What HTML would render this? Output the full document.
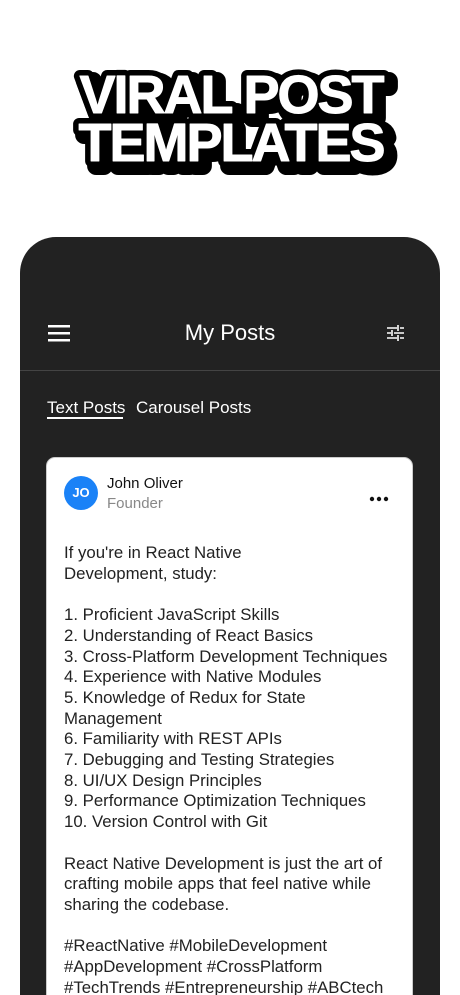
<!DOCTYPE html>
<html><head><meta charset="utf-8"><style>
*{margin:0;padding:0;box-sizing:border-box}
html,body{width:460px;height:995px;overflow:hidden}
body{background:#fff;position:relative;font-family:"Liberation Sans",sans-serif}
.phone{position:absolute;left:20px;top:237px;width:420px;height:800px;background:#222;border-radius:36px 36px 0 0}
.hdr{position:absolute;top:320px;left:0;width:460px;text-align:center;color:#fff;font-size:22px}
.div{position:absolute;left:20px;top:370px;width:420px;height:1px;background:#444}
.tab{position:absolute;top:398px;color:#fff;font-size:17px}
.card{position:absolute;left:46px;top:457px;width:367px;height:560px;background:#fff;border-radius:9px;border:1px solid #ccc}
.av{position:absolute;left:64px;top:476px;width:34px;height:34px;border-radius:50%;background:#1a82f7;color:#fff;font-weight:bold;font-size:13px;text-align:center;line-height:34px}
.body{position:absolute;left:64px;top:543px;font-size:16.8px;line-height:20.7px;color:#222;white-space:pre}
</style></head><body>
<svg style="position:absolute;left:0;top:40px" width="460" height="150">
<g font-family="Liberation Sans" font-weight="bold" font-size="54" text-anchor="middle" letter-spacing="-2" stroke-linejoin="round">
<text x="236" y="78" fill="#000" stroke="#000" stroke-width="18">VIRAL POST</text>
<text x="236" y="126" fill="#000" stroke="#000" stroke-width="18">TEMPLATES</text>
<text x="231" y="73" fill="#fff" stroke="#000" stroke-width="12" paint-order="stroke">VIRAL POST</text>
<text x="231" y="121" fill="#fff" stroke="#000" stroke-width="12" paint-order="stroke">TEMPLATES</text>
<text x="231" y="73" fill="#fff" stroke="#fff" stroke-width="1">VIRAL POST</text>
<text x="231" y="121" fill="#fff" stroke="#fff" stroke-width="1">TEMPLATES</text>
</g></svg>
<div class="phone"></div>
<svg style="position:absolute;left:48px;top:324px" width="24" height="20"><g fill="#fff"><rect x="0" y="1" width="22" height="2.5"/><rect x="0" y="8" width="22" height="2.5"/><rect x="0" y="15" width="22" height="2.5"/></g></svg>
<div class="hdr">My Posts</div>
<svg style="position:absolute;left:386px;top:324px" width="20" height="20" stroke="#fff" stroke-width="1.6"><path d="M1 4h10M14 4h4M12 1v6M1 9h4M8 9h10M6 6v6M1 14h10M14 14h4M12 11v6"/></svg>
<div class="div"></div>
<div class="tab" style="left:47px">Text Posts</div>
<div style="position:absolute;left:47px;top:417px;width:76px;height:2px;background:#fff"></div>
<div class="tab" style="left:136px">Carousel Posts</div>
<div class="card"></div>
<div class="av">JO</div>
<div style="position:absolute;left:107px;top:475px;font-size:15px;color:#111">John Oliver</div>
<div style="position:absolute;left:107px;top:495px;font-size:15px;color:#888">Founder</div>
<svg style="position:absolute;left:369px;top:496px" width="20" height="6" fill="#111"><circle cx="3" cy="3" r="2.2"/><circle cx="10" cy="3" r="2.2"/><circle cx="17" cy="3" r="2.2"/></svg>
<div class="body">If you're in React Native
Development, study:

1. Proficient JavaScript Skills
2. Understanding of React Basics
3. Cross-Platform Development Techniques
4. Experience with Native Modules
5. Knowledge of Redux for State
Management
6. Familiarity with REST APIs
7. Debugging and Testing Strategies
8. UI/UX Design Principles
9. Performance Optimization Techniques
10. Version Control with Git

React Native Development is just the art of
crafting mobile apps that feel native while
sharing the codebase.

#ReactNative #MobileDevelopment
#AppDevelopment #CrossPlatform
#TechTrends #Entrepreneurship #ABCtech</div>
</body></html>
